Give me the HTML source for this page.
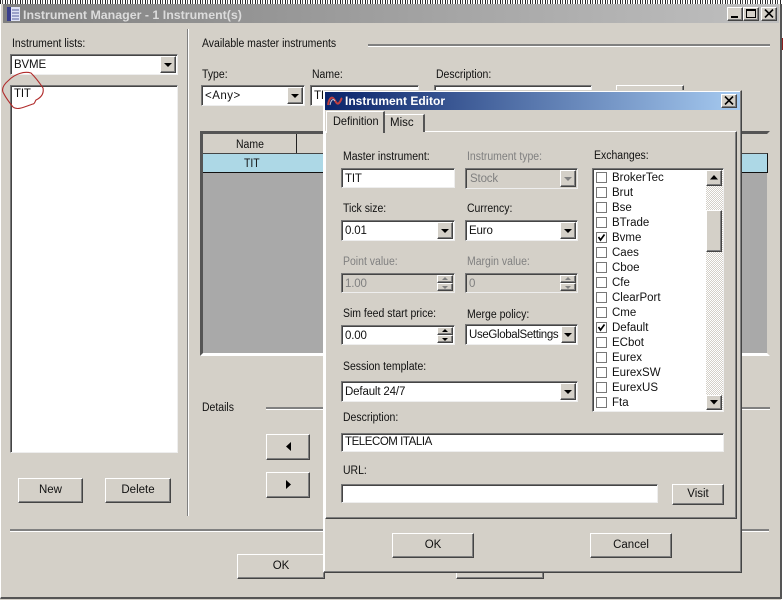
<!DOCTYPE html>
<html><head><meta charset="utf-8">
<style>
html,body{margin:0;padding:0;background:#d4d0c8;}
#p{position:relative;width:783px;height:600px;overflow:hidden;background:#d4d0c8;font-family:"Liberation Sans",sans-serif;font-size:11.5px;color:#111;}
#p div{position:absolute;box-sizing:border-box;}
.t{white-space:nowrap;line-height:14px;margin-top:1px;transform:scaleX(.91);transform-origin:0 0;}
.n{transform:none;}
.d{color:#808080;}
.f{background:#fff;border:1px solid;border-color:#777 #eee #eee #777;box-shadow:inset 1px 1px 0 #444;line-height:20px;padding-left:3px;white-space:nowrap;overflow:hidden;font-size:11.5px;letter-spacing:-.15px;}
.f.g{background:#d4d0c8;color:#808080;}
.b{background:#d4d0c8;border:1px solid;border-color:#fff #444 #444 #fff;box-shadow:inset -1px -1px 0 #808080;text-align:center;font-size:11.5px;}
.a{width:0;height:0;border-left:4px solid transparent;border-right:4px solid transparent;border-top:4px solid #000;}
.u,.w{width:0;height:0;border-left:3px solid transparent;border-right:3px solid transparent;}
.u{border-bottom:3px solid #000;}
.w{border-top:3px solid #000;}
.gr{border-bottom-color:#808080;border-top-color:#808080;}
.sep{height:2px;background:#808080;border-bottom:1px solid #fff;}
.vs{width:2px;background:#808080;border-right:1px solid #fff;}
</style></head><body><div id="p">

<div style="left:0;top:0;width:783px;height:4px;background:repeating-linear-gradient(90deg,#222 0 1px,#fff 1px 2px,#555 2px 3px,#fff 3px 5px);"></div>
<div style="left:781px;top:0;width:2px;height:600px;background:#fff;"></div>
<div style="left:781px;top:38px;width:2px;height:12px;background:#902020;"></div>

<!-- main window -->
<div style="left:0;top:4px;width:782px;height:595px;background:#d4d0c8;border-right:2px solid #555;border-bottom:2px solid #555;border-left:1px solid #fff;"></div>
<div style="left:3px;top:4px;width:776px;height:19px;background:linear-gradient(90deg,#808080,#c0c0c0);"></div>
<svg style="position:absolute;left:7px;top:7px" width="13" height="14"><rect x="0" y="0" width="13" height="14" fill="#dfe3f5"/><rect x="0" y="0" width="4" height="14" fill="#3a3f8c"/><path d="M5 3h7M5 6h7M5 9h7M5 12h7" stroke="#5860a0"/></svg>
<div class="t n" style="left:23px;top:7px;color:#dcdcdc;font-weight:bold;font-size:12.4px;">Instrument Manager - 1 Instrument(s)</div>
<div class="b" style="left:727px;top:7px;width:16px;height:14px;"></div><div style="left:731px;top:16px;width:7px;height:2px;background:#000;"></div>
<div class="b" style="left:743px;top:7px;width:16px;height:14px;"></div><div style="left:746px;top:9px;width:10px;height:9px;border:1px solid #000;border-top:2px solid #000;"></div>
<div class="b" style="left:761px;top:7px;width:16px;height:14px;"></div>
<svg style="position:absolute;left:764px;top:9px" width="10" height="9"><path d="M1 0.5L9 8.5M9 0.5L1 8.5" stroke="#000" stroke-width="1.6"/></svg>

<!-- left -->
<div class="t" style="left:12px;top:36px;">Instrument lists:</div>
<div class="f" style="left:10px;top:54px;width:168px;height:21px;">BVME</div>
<div class="b" style="left:160px;top:56px;width:16px;height:17px;"></div><div class="a" style="left:164px;top:63px;"></div>
<div class="f" style="left:10px;top:85px;width:168px;height:368px;line-height:17px;padding-left:3px;">TIT</div>
<svg style="position:absolute;left:0;top:68px" width="50" height="46"><path d="M9 12C15 6 24 3 31 5C36 10 39 14 43 20C44 25 42 29 36 32C35 33 35 36 33 36C26 38 18 43 13 39C9 34 6 30 4 26C1 22 3 17 9 12Z" fill="none" stroke="#b02a2a" stroke-width="1.1"/></svg>
<div class="b" style="left:18px;top:478px;width:65px;height:25px;line-height:22px;">New</div>
<div class="b" style="left:105px;top:478px;width:66px;height:25px;line-height:22px;">Delete</div>
<div class="vs" style="left:187px;top:29px;height:487px;"></div>
<div class="sep" style="left:10px;top:529px;width:314px;height:3px;"></div>
<div class="sep" style="left:741px;top:529px;width:28px;height:3px;"></div>

<!-- right -->
<div class="t" style="left:202px;top:36px;">Available master instruments</div>
<div class="sep" style="left:368px;top:44px;width:402px;height:3px;"></div>
<div class="t" style="left:202px;top:67px;">Type:</div>
<div class="t" style="left:312px;top:67px;">Name:</div>
<div class="t" style="left:436px;top:67px;">Description:</div>
<div class="f" style="left:201px;top:85px;width:104px;height:21px;letter-spacing:.5px;">&lt;Any&gt;</div>
<div class="b" style="left:287px;top:87px;width:16px;height:17px;"></div><div class="a" style="left:291px;top:94px;"></div>
<div class="f" style="left:310px;top:85px;width:109px;height:21px;">TIT</div>
<div class="f" style="left:434px;top:85px;width:158px;height:21px;"></div>
<div class="b" style="left:616px;top:85px;width:68px;height:25px;"></div>

<div style="left:200px;top:131px;width:570px;height:225px;background:#a9a9a9;border:3px solid;border-color:#555 #d4d0c8 #fff #555;"></div>
<div style="left:203px;top:134px;width:565px;height:20px;background:#d4d0c8;border-bottom:1px solid #888;"></div>
<div class="t" style="left:236px;top:137px;">Name</div>
<div style="left:296px;top:134px;width:1px;height:39px;background:#222;"></div>
<div style="left:203px;top:153px;width:565px;height:20px;background:#add8e6;border-top:1px solid #444;border-bottom:1px solid #111;border-right:1px solid #111;"></div>
<div class="t" style="left:244px;top:156px;">TIT</div>

<div class="t" style="left:202px;top:400px;">Details</div>
<div class="sep" style="left:266px;top:407px;width:504px;height:3px;"></div>
<div class="b" style="left:266px;top:434px;width:44px;height:26px;"></div>
<svg style="position:absolute;left:286px;top:442px" width="6" height="10"><path d="M5 0V9L0 4.5Z" fill="#000"/></svg>
<div class="b" style="left:266px;top:472px;width:44px;height:26px;"></div>
<svg style="position:absolute;left:286px;top:480px" width="6" height="10"><path d="M0 0V9L5 4.5Z" fill="#000"/></svg>
<div class="b" style="left:237px;top:554px;width:88px;height:25px;line-height:22px;">OK</div>
<div class="b" style="left:456px;top:554px;width:88px;height:25px;"></div>

<!-- dialog -->
<div style="left:323px;top:90px;width:419px;height:483px;background:#d4d0c8;border:1px solid;border-color:#d4d0c8 #444 #444 #fff;box-shadow:inset -1px -1px 0 #808080,inset 1px 1px 0 #fff;"></div>
<div style="left:325px;top:92px;width:415px;height:18px;background:linear-gradient(90deg,#0a246a,#a6caf0);"></div>
<svg style="position:absolute;left:327px;top:95px" width="16" height="12"><path d="M1 10C2 3 5 1 7 4S10 10 12 8 14 4 15 3" fill="none" stroke="#c04040" stroke-width="2"/><path d="M3 10C4 5 6 3 8 6" fill="none" stroke="#c8c8d8" stroke-width="1"/></svg>
<div class="t n" style="left:345px;top:93px;color:#fff;font-weight:bold;font-size:12px;">Instrument Editor</div>
<div class="b" style="left:721px;top:94px;width:16px;height:14px;"></div>
<svg style="position:absolute;left:724px;top:96px" width="10" height="9"><path d="M1 0.5L9 8.5M9 0.5L1 8.5" stroke="#000" stroke-width="1.6"/></svg>

<!-- tabs -->
<div style="left:325px;top:131px;width:412px;height:388px;border:1px solid;border-color:#fff #444 #444 #fff;box-shadow:inset -1px -1px 0 #808080;"></div>
<div style="left:384px;top:114px;width:41px;height:18px;background:#d4d0c8;border-top:1px solid #fff;border-left:1px solid #fff;border-right:2px solid #555;"></div>
<div class="t n" style="left:390px;top:115px;font-size:11.5px;">Misc</div>
<div style="left:326px;top:111px;width:59px;height:22px;background:#d4d0c8;border-top:1px solid #fff;border-left:1px solid #fff;border-right:2px solid #555;"></div>
<div class="t" style="left:333px;top:113px;font-size:12px;">Definition</div>

<!-- form -->
<div class="t" style="left:343px;top:149px;">Master instrument:</div>
<div class="t d" style="left:467px;top:149px;">Instrument type:</div>
<div class="t" style="left:594px;top:148px;">Exchanges:</div>
<div class="f" style="left:341px;top:168px;width:114px;height:20px;">TIT</div>
<div class="f g" style="left:465px;top:168px;width:113px;height:21px;padding-left:4px;">Stock</div>
<div class="b" style="left:560px;top:170px;width:16px;height:17px;"></div><div class="a" style="left:564px;top:177px;border-top-color:#808080;"></div>

<div class="t" style="left:343px;top:201px;">Tick size:</div>
<div class="t" style="left:467px;top:201px;">Currency:</div>
<div class="f" style="left:341px;top:220px;width:114px;height:21px;">0.01</div>
<div class="b" style="left:437px;top:222px;width:16px;height:17px;"></div><div class="a" style="left:441px;top:229px;"></div>
<div class="f" style="left:465px;top:220px;width:113px;height:21px;">Euro</div>
<div class="b" style="left:560px;top:222px;width:16px;height:17px;"></div><div class="a" style="left:564px;top:229px;"></div>

<div class="t d" style="left:343px;top:254px;">Point value:</div>
<div class="t d" style="left:467px;top:254px;">Margin value:</div>
<div class="f g" style="left:341px;top:273px;width:114px;height:20px;">1.00</div>
<div class="b" style="left:437px;top:275px;width:16px;height:8px;"></div><div class="b" style="left:437px;top:283px;width:16px;height:8px;"></div>
<div class="u gr" style="left:442px;top:277px;"></div><div class="w gr" style="left:442px;top:286px;"></div>
<div class="f g" style="left:465px;top:273px;width:113px;height:20px;">0</div>
<div class="b" style="left:560px;top:275px;width:16px;height:8px;"></div><div class="b" style="left:560px;top:283px;width:16px;height:8px;"></div>
<div class="u gr" style="left:565px;top:277px;"></div><div class="w gr" style="left:565px;top:286px;"></div>

<div class="t" style="left:343px;top:306px;">Sim feed start price:</div>
<div class="t" style="left:467px;top:307px;">Merge policy:</div>
<div class="f" style="left:341px;top:325px;width:114px;height:20px;">0.00</div>
<div class="b" style="left:437px;top:327px;width:16px;height:8px;"></div><div class="b" style="left:437px;top:335px;width:16px;height:8px;"></div>
<div class="u" style="left:442px;top:329px;"></div><div class="w" style="left:442px;top:338px;"></div>
<div class="f" style="left:465px;top:324px;width:113px;height:21px;letter-spacing:-.35px;">UseGlobalSettings</div>
<div class="b" style="left:561px;top:326px;width:15px;height:17px;"></div><div class="a" style="left:564px;top:333px;"></div>

<div class="t" style="left:343px;top:359px;">Session template:</div>
<div class="f" style="left:341px;top:381px;width:237px;height:21px;">Default 24/7</div>
<div class="b" style="left:560px;top:383px;width:16px;height:17px;"></div><div class="a" style="left:564px;top:390px;"></div>
<div class="t" style="left:343px;top:410px;">Description:</div>
<div class="f" style="left:341px;top:433px;width:383px;height:19px;line-height:17px;letter-spacing:-.45px;">TELECOM ITALIA</div>
<div class="t" style="left:343px;top:463px;">URL:</div>
<div class="f" style="left:341px;top:484px;width:317px;height:19px;"></div>
<div class="b" style="left:672px;top:484px;width:52px;height:21px;line-height:19px;">Visit</div>
<div class="b" style="left:392px;top:533px;width:82px;height:25px;line-height:22px;">OK</div>
<div class="b" style="left:590px;top:533px;width:82px;height:25px;line-height:22px;">Cancel</div>

<!-- exchanges list -->
<div class="f" style="left:592px;top:168px;width:132px;height:244px;"></div>
<div style="left:706px;top:170px;width:17px;height:240px;background:repeating-conic-gradient(#d4d0c8 0 25%,#fff 0 50%) 0 0/2px 2px;"></div>
<div class="b" style="left:706px;top:170px;width:16px;height:16px;"></div>
<svg style="position:absolute;left:710px;top:175px" width="8" height="5"><path d="M0 4.5H8L4 0Z" fill="#000"/></svg>
<div class="b" style="left:706px;top:210px;width:16px;height:42px;"></div>
<div class="b" style="left:706px;top:395px;width:16px;height:15px;"></div>
<svg style="position:absolute;left:710px;top:400px" width="8" height="5"><path d="M0 0H8L4 4.5Z" fill="#000"/></svg>

<div class="t n" style="left:612px;top:170px;">BrokerTec</div><div class="t n" style="left:612px;top:185px;">Brut</div><div class="t n" style="left:612px;top:200px;">Bse</div><div class="t n" style="left:612px;top:215px;">BTrade</div><div class="t n" style="left:612px;top:230px;">Bvme</div><div class="t n" style="left:612px;top:245px;">Caes</div><div class="t n" style="left:612px;top:260px;">Cboe</div><div class="t n" style="left:612px;top:275px;">Cfe</div><div class="t n" style="left:612px;top:290px;">ClearPort</div><div class="t n" style="left:612px;top:305px;">Cme</div><div class="t n" style="left:612px;top:320px;">Default</div><div class="t n" style="left:612px;top:335px;">ECbot</div><div class="t n" style="left:612px;top:350px;">Eurex</div><div class="t n" style="left:612px;top:365px;">EurexSW</div><div class="t n" style="left:612px;top:380px;">EurexUS</div><div class="t n" style="left:612px;top:395px;">Fta</div>

<svg style="position:absolute;left:596px;top:172px" width="11" height="240" fill="none" stroke="#777"><rect x=".5" y=".5" width="10" height="10"/><rect x=".5" y="15.5" width="10" height="10"/><rect x=".5" y="30.5" width="10" height="10"/><rect x=".5" y="45.5" width="10" height="10"/><rect x=".5" y="60.5" width="10" height="10"/><rect x=".5" y="75.5" width="10" height="10"/><rect x=".5" y="90.5" width="10" height="10"/><rect x=".5" y="105.5" width="10" height="10"/><rect x=".5" y="120.5" width="10" height="10"/><rect x=".5" y="135.5" width="10" height="10"/><rect x=".5" y="150.5" width="10" height="10"/><rect x=".5" y="165.5" width="10" height="10"/><rect x=".5" y="180.5" width="10" height="10"/><rect x=".5" y="195.5" width="10" height="10"/><rect x=".5" y="210.5" width="10" height="10"/><rect x=".5" y="225.5" width="10" height="10"/><path d="M2.5 65L4.5 68L8.5 62.5M2.5 155L4.5 158L8.5 152.5" stroke="#000" stroke-width="1.7"/></svg>

</div></body></html>
